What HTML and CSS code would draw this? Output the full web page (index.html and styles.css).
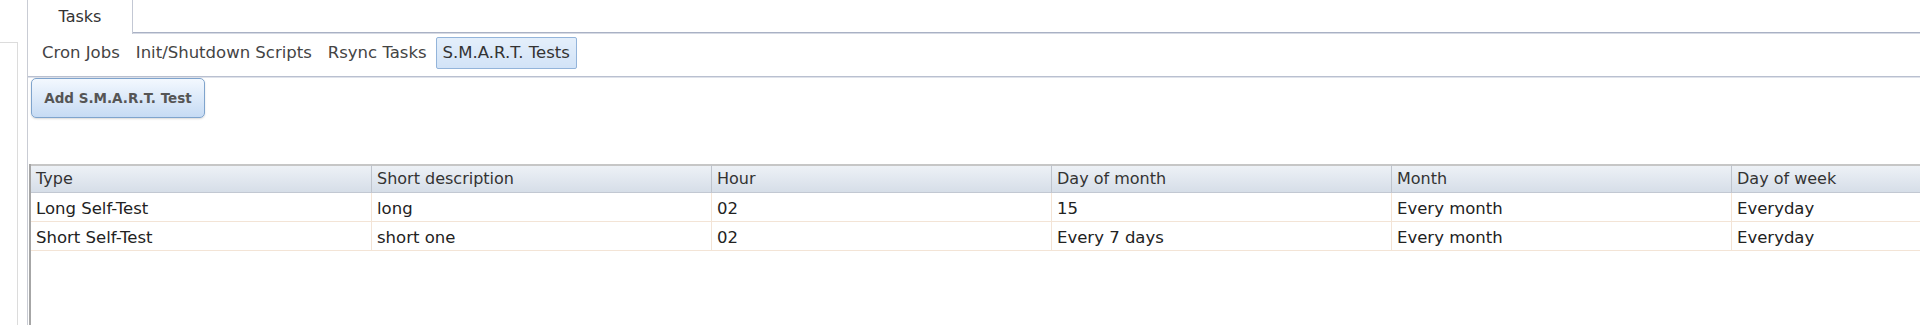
FILE: index.html
```html
<!DOCTYPE html>
<html lang="en">
<head>
    <meta charset="UTF-8">
    <title>Tasks</title>
    <link rel="stylesheet" href="styles.css">
</head>
<body>
    <div class="page">
        <div class="side"></div>

        <div class="main">
            <div class="tabbar">
                <div class="tab">Tasks</div>
                <div class="tabfill"></div>
            </div>

            <div class="subtabs">
                <span class="subtab">Cron Jobs</span>
                <span class="subtab">Init/Shutdown Scripts</span>
                <span class="subtab">Rsync Tasks</span>
                <span class="subtab active">S.M.A.R.T. Tests</span>
            </div>

            <div class="toolbar">
                <button class="addBtn">Add S.M.A.R.T. Test</button>
            </div>

            <div class="grid">
                <div class="head">Type</div>
                <div class="head">Short description</div>
                <div class="head">Hour</div>
                <div class="head">Day of month</div>
                <div class="head">Month</div>
                <div class="head">Day of week</div>

                <div class="cell">Long Self-Test</div>
                <div class="cell">long</div>
                <div class="cell">02</div>
                <div class="cell">15</div>
                <div class="cell">Every month</div>
                <div class="cell">Everyday</div>

                <div class="cell">Short Self-Test</div>
                <div class="cell">short one</div>
                <div class="cell">02</div>
                <div class="cell">Every 7 days</div>
                <div class="cell">Every month</div>
                <div class="cell">Everyday</div>
            </div>
        </div>
    </div>
</body>
</html>
```

FILE: styles.css
```css
body {
    margin: 0;
    padding: 0;
    background-color: #fff;
    font-family: "DejaVu Sans", Verdana, sans-serif;
    overflow: hidden;
}

.page {
    display: flex;
    height: 325px;
    gap: 9px;
}

.side {
    width: 17px;
    flex-shrink: 0;
    margin-top: 42px;
    border-top: 1px solid #dcdcdc;
    border-right: 1px solid #dcdcdc;
}

.main {
    flex: 1;
    min-width: 0;
    border-left: 1px solid #c9ccd4;
    overflow: hidden;
}

/* top tab */
.tabbar {
    display: flex;
    height: 34px;
}

.tab {
    width: 105px;
    height: 34px;
    border-right: 1px solid #c3c8d4;
    box-sizing: border-box;
    font-size: 16px;
    color: #333;
    text-align: center;
    line-height: 33px;
    background-color: #fff;
}

.tabfill {
    flex: 1;
    border-bottom: 1px solid #a9b1c4;
    box-shadow: 0 1px 0 #d6dae4;
    height: 32px;
}

/* sub tabs */
.subtabs {
    display: flex;
    align-items: center;
    height: 38px;
    padding: 0 0 4px 6px;
    border-bottom: 1px solid #b9c0d0;
    box-shadow: 0 1px 0 #dfe2ea;
}

.subtab {
    font-size: 16.5px;
    color: #444;
    padding: 0 6px;
    margin: 0 1px;
    height: 30px;
    line-height: 30px;
    border: 1px solid transparent;
    border-radius: 2px;
}

.subtab.active {
    color: #333;
    border-color: #93b4da;
    background: linear-gradient(#e4effb, #d2e3f7);
}

/* button */
.toolbar {
    height: 86px;
    padding: 1px 0 0 3px;
}

.addBtn {
    width: 174px;
    height: 40px;
    border: 1px solid #7fa4cd;
    border-radius: 5px;
    background: linear-gradient(#f3f8fe, #c6dbf4);
    box-shadow: 0 1px 2px rgba(0, 0, 0, 0.15);
    font-family: "DejaVu Sans", Verdana, sans-serif;
    font-weight: bold;
    font-size: 13.5px;
    color: #555;
    padding: 0;
}

/* grid */
.grid {
    display: grid;
    grid-template-columns: repeat(6, 340px);
    margin-left: 1px;
    border-left: 2px solid #a6a6a6;
    height: 200px;
    align-content: start;
}

.head {
    height: 29px;
    box-sizing: border-box;
    border-top: 2px solid #c6c6c6;
    border-bottom: 1px solid #c2c8d2;
    border-left: 1px solid #bfc4cc;
    background: linear-gradient(#edf1f6, #d6dee8);
    font-size: 16px;
    color: #333;
    line-height: 26px;
    padding-left: 5px;
}

.head:first-child {
    border-left: none;
}

.cell {
    height: 29px;
    box-sizing: border-box;
    border-bottom: 1px solid #f3e4d6;
    border-left: 1px solid #f3e4d6;
    font-size: 16.5px;
    color: #222;
    line-height: 28px;
    padding: 2px 0 0 5px;
}

.cell:nth-child(6n+1) {
    border-left: none;
}
```
